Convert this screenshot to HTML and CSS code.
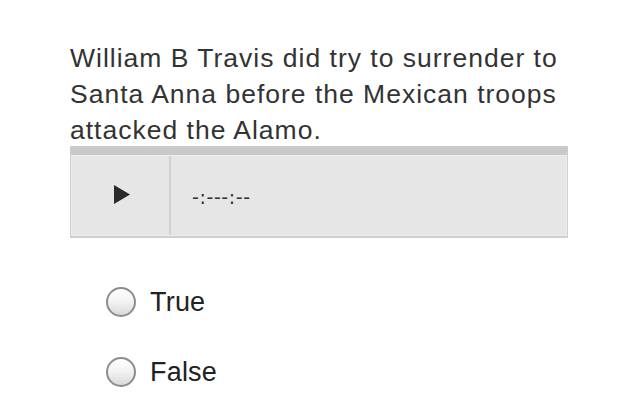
FILE: index.html
```html
<!DOCTYPE html>
<html>
<head>
<meta charset="utf-8">
<link rel="stylesheet" href="styles.css">
</head>
<body>
<div class="page">
  <p class="question">William B Travis did try to surrender to Santa Anna before the Mexican troops attacked the Alamo.</p>
  <div class="player">
    <div class="player-top"></div>
    <div class="player-body">
      <div class="play-cell">
        <svg width="16" height="19" viewBox="0 0 16 19"><polygon points="0,0 16,9.5 0,19" fill="#2a2a2a"/></svg>
      </div>
      <div class="time-cell">-:---:--</div>
    </div>
  </div>
  <div class="options">
    <label class="option"><span class="radio"></span><span class="label">True</span></label>
    <label class="option"><span class="radio"></span><span class="label">False</span></label>
  </div>
</div>
</body>
</html>
```

FILE: styles.css
```css
html, body {
  margin: 0;
  padding: 0;
  background: #ffffff;
}
body {
  font-family: "Liberation Sans", Arial, sans-serif;
  color: #333333;
}
.page {
  width: 498px;
  margin-left: 70px;
  padding-top: 40px;
}
.question {
  margin: 0 0 -2px 0;
  font-size: 26.5px;
  letter-spacing: 1px;
  line-height: 36px;
  color: #333333;
  position: relative;
  z-index: 0;
}
.player {
  position: relative;
  z-index: 1;
  height: 92px;
  display: flex;
  flex-direction: column;
  border-left: 1px solid #cfcfcf;
  border-right: 1px solid #cfcfcf;
  border-bottom: 2px solid #cfcfcf;
  box-sizing: border-box;
}
.player-top {
  height: 9px;
  background: #c9c9c9;
}
.player-body {
  flex: 1;
  display: flex;
  background: #e6e6e6;
  border: 1px solid #ececec;
}
.play-cell {
  width: 95px;
  display: flex;
  align-items: center;
  justify-content: center;
  border-right: 2px solid #d2d2d2;
  padding-left: 2px;
  padding-bottom: 2px;
}
.time-cell {
  display: flex;
  align-items: center;
  padding-left: 21px;
  padding-top: 2px;
  font-family: "DejaVu Sans", sans-serif;
  font-size: 19px;
  letter-spacing: 0.6px;
  color: #333333;
}
.options {
  display: flex;
  flex-direction: column;
  gap: 40px;
  padding-left: 36px;
  padding-top: 49px;
}
.option {
  display: flex;
  align-items: center;
  gap: 14px;
  height: 30px;
}
.radio {
  width: 26px;
  height: 26px;
  border: 2px solid #8d8d8d;
  border-radius: 50%;
  background: linear-gradient(to bottom, #ffffff 0%, #f2f2f2 50%, #d9d9d9 100%);
  flex: none;
}
.label {
  font-size: 27px;
  letter-spacing: 0.2px;
  line-height: 30px;
  color: #222222;
}
```
